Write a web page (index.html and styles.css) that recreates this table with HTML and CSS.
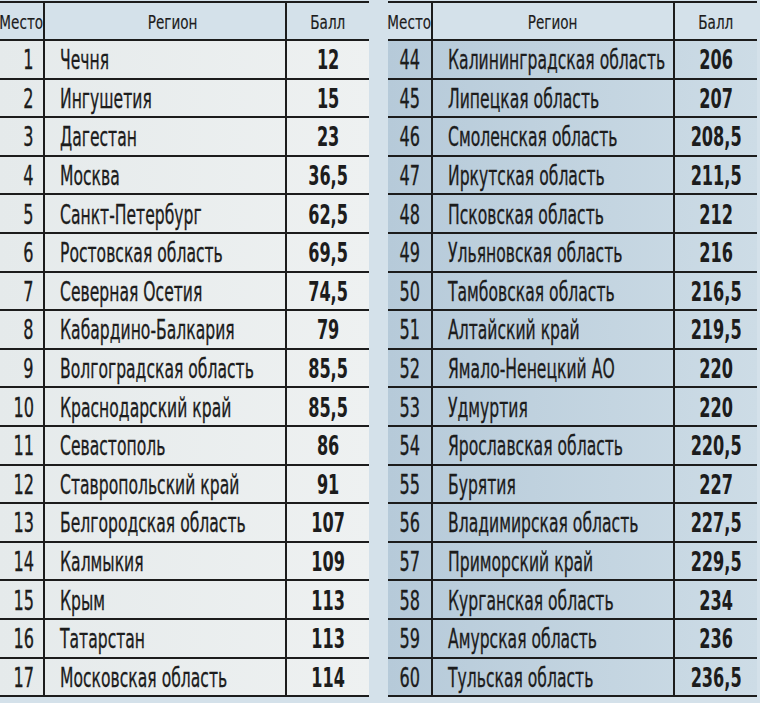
FILE: index.html
```html
<!DOCTYPE html>
<html lang="ru">
<head>
<meta charset="utf-8">
<link rel="stylesheet" href="styles.css">
</head>
<body>
<div class="page">
  <div class="tbl left">
    <div class="row head"><div class="c place"><span class="t">Место</span></div><div class="c region"><span class="t">Регион</span></div><div class="c score"><span class="t">Балл</span></div></div>
    <div class="row"><div class="c place"><span class="t">1</span></div><div class="c region"><span class="t">Чечня</span></div><div class="c score"><span class="t">12</span></div></div>
    <div class="row"><div class="c place"><span class="t">2</span></div><div class="c region"><span class="t">Ингушетия</span></div><div class="c score"><span class="t">15</span></div></div>
    <div class="row"><div class="c place"><span class="t">3</span></div><div class="c region"><span class="t">Дагестан</span></div><div class="c score"><span class="t">23</span></div></div>
    <div class="row"><div class="c place"><span class="t">4</span></div><div class="c region"><span class="t">Москва</span></div><div class="c score"><span class="t">36,5</span></div></div>
    <div class="row"><div class="c place"><span class="t">5</span></div><div class="c region"><span class="t">Санкт-Петербург</span></div><div class="c score"><span class="t">62,5</span></div></div>
    <div class="row"><div class="c place"><span class="t">6</span></div><div class="c region"><span class="t">Ростовская область</span></div><div class="c score"><span class="t">69,5</span></div></div>
    <div class="row"><div class="c place"><span class="t">7</span></div><div class="c region"><span class="t">Северная Осетия</span></div><div class="c score"><span class="t">74,5</span></div></div>
    <div class="row"><div class="c place"><span class="t">8</span></div><div class="c region"><span class="t">Кабардино-Балкария</span></div><div class="c score"><span class="t">79</span></div></div>
    <div class="row"><div class="c place"><span class="t">9</span></div><div class="c region"><span class="t">Волгоградская область</span></div><div class="c score"><span class="t">85,5</span></div></div>
    <div class="row"><div class="c place"><span class="t">10</span></div><div class="c region"><span class="t">Краснодарский край</span></div><div class="c score"><span class="t">85,5</span></div></div>
    <div class="row"><div class="c place"><span class="t">11</span></div><div class="c region"><span class="t">Севастополь</span></div><div class="c score"><span class="t">86</span></div></div>
    <div class="row"><div class="c place"><span class="t">12</span></div><div class="c region"><span class="t">Ставропольский край</span></div><div class="c score"><span class="t">91</span></div></div>
    <div class="row"><div class="c place"><span class="t">13</span></div><div class="c region"><span class="t">Белгородская область</span></div><div class="c score"><span class="t">107</span></div></div>
    <div class="row"><div class="c place"><span class="t">14</span></div><div class="c region"><span class="t">Калмыкия</span></div><div class="c score"><span class="t">109</span></div></div>
    <div class="row"><div class="c place"><span class="t">15</span></div><div class="c region"><span class="t">Крым</span></div><div class="c score"><span class="t">113</span></div></div>
    <div class="row"><div class="c place"><span class="t">16</span></div><div class="c region"><span class="t">Татарстан</span></div><div class="c score"><span class="t">113</span></div></div>
    <div class="row"><div class="c place"><span class="t">17</span></div><div class="c region"><span class="t">Московская область</span></div><div class="c score"><span class="t">114</span></div></div>
  </div>
  <div class="tbl right">
    <div class="row head"><div class="c place"><span class="t">Место</span></div><div class="c region"><span class="t">Регион</span></div><div class="c score"><span class="t">Балл</span></div></div>
    <div class="row"><div class="c place"><span class="t">44</span></div><div class="c region"><span class="t">Калининградская область</span></div><div class="c score"><span class="t">206</span></div></div>
    <div class="row"><div class="c place"><span class="t">45</span></div><div class="c region"><span class="t">Липецкая область</span></div><div class="c score"><span class="t">207</span></div></div>
    <div class="row"><div class="c place"><span class="t">46</span></div><div class="c region"><span class="t">Смоленская область</span></div><div class="c score"><span class="t">208,5</span></div></div>
    <div class="row"><div class="c place"><span class="t">47</span></div><div class="c region"><span class="t">Иркутская область</span></div><div class="c score"><span class="t">211,5</span></div></div>
    <div class="row"><div class="c place"><span class="t">48</span></div><div class="c region"><span class="t">Псковская область</span></div><div class="c score"><span class="t">212</span></div></div>
    <div class="row"><div class="c place"><span class="t">49</span></div><div class="c region"><span class="t">Ульяновская область</span></div><div class="c score"><span class="t">216</span></div></div>
    <div class="row"><div class="c place"><span class="t">50</span></div><div class="c region"><span class="t">Тамбовская область</span></div><div class="c score"><span class="t">216,5</span></div></div>
    <div class="row"><div class="c place"><span class="t">51</span></div><div class="c region"><span class="t">Алтайский край</span></div><div class="c score"><span class="t">219,5</span></div></div>
    <div class="row"><div class="c place"><span class="t">52</span></div><div class="c region"><span class="t">Ямало-Ненецкий АО</span></div><div class="c score"><span class="t">220</span></div></div>
    <div class="row"><div class="c place"><span class="t">53</span></div><div class="c region"><span class="t">Удмуртия</span></div><div class="c score"><span class="t">220</span></div></div>
    <div class="row"><div class="c place"><span class="t">54</span></div><div class="c region"><span class="t">Ярославская область</span></div><div class="c score"><span class="t">220,5</span></div></div>
    <div class="row"><div class="c place"><span class="t">55</span></div><div class="c region"><span class="t">Бурятия</span></div><div class="c score"><span class="t">227</span></div></div>
    <div class="row"><div class="c place"><span class="t">56</span></div><div class="c region"><span class="t">Владимирская область</span></div><div class="c score"><span class="t">227,5</span></div></div>
    <div class="row"><div class="c place"><span class="t">57</span></div><div class="c region"><span class="t">Приморский край</span></div><div class="c score"><span class="t">229,5</span></div></div>
    <div class="row"><div class="c place"><span class="t">58</span></div><div class="c region"><span class="t">Курганская область</span></div><div class="c score"><span class="t">234</span></div></div>
    <div class="row"><div class="c place"><span class="t">59</span></div><div class="c region"><span class="t">Амурская область</span></div><div class="c score"><span class="t">236</span></div></div>
    <div class="row"><div class="c place"><span class="t">60</span></div><div class="c region"><span class="t">Тульская область</span></div><div class="c score"><span class="t">236,5</span></div></div>
  </div>
</div>
</body>
</html>
```

FILE: styles.css
```css
html, body {
  margin: 0;
  padding: 0;
}
body {
  background: #d4e1ea;
  color: #1c1c1c;
  font-family: "DejaVu Sans", "Liberation Sans", sans-serif;
  width: 760px;
  height: 703px;
  overflow: hidden;
}
.page {
  display: flex;
  gap: 19px;
  padding-top: 1px;
}
.tbl {
  width: 369px;
  border-top: 2px solid #1c1c1c;
}
.row {
  display: grid;
  grid-template-columns: 45px 242px 82px;
  height: 38.6px;
  box-sizing: border-box;
  border-bottom: 2px solid #1c1c1c;
}
.row.head {
  height: 38px;
  background: #d4e1ea;
}
.left .row:not(.head) {
  background: linear-gradient(90deg, #e5eaeb, #eef1f1);
}
.right .row:not(.head) {
  background: linear-gradient(90deg, #b6cad9, #cddce6);
}
.c {
  display: flex;
  align-items: center;
  font-size: 26px;
  padding-top: 2px;
  white-space: nowrap;
  min-width: 0;
}
.t {
  display: inline-block;
  transform: scaleX(0.6);
  -webkit-text-stroke: 0.35px #1c1c1c;
}
.place {
  justify-content: flex-end;
  padding-right: 9px;
  border-right: 2px solid #1c1c1c;
}
.place .t {
  transform: scaleX(0.62);
  transform-origin: right center;
}
.right .place {
  padding-right: 11px;
}
.region {
  padding-left: 15px;
  border-right: 2px solid #1c1c1c;
}
.region .t {
  transform-origin: left center;
}
.score {
  justify-content: center;
  font-weight: bold;
}
.score .t {
  transform: scaleX(0.62);
  transform-origin: center;
  -webkit-text-stroke: 0;
}
.head .c {
  font-size: 20px;
  justify-content: center;
  padding: 1px 0 0 0;
  font-weight: normal;
}
.head .t {
  transform: scaleX(0.68);
  transform-origin: center;
  -webkit-text-stroke: 0.2px #1c1c1c;
}
.left .head .region {
  padding-left: 16px;
}
```
